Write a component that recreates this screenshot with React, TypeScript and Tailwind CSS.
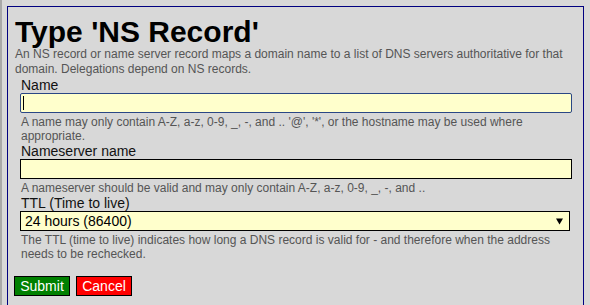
import React from 'react';

const font = { fontFamily: '"Liberation Sans", Arial, sans-serif' };

const Help = ({ children }: { children: React.ReactNode }) => (
  <p className="mt-[2px] ml-[6px] pr-[14px] text-[12px] leading-[14px] text-[#555555]">{children}</p>
);

const Label = ({ children }: { children: React.ReactNode }) => (
  <label className="block ml-[6px] text-[14px] leading-[16px] text-[#111111]">{children}</label>
);

export default function App() {
  return (
    <div className="w-[590px] h-[305px] overflow-hidden bg-[#d8d8d8] border-l-2 border-[#a8a8a8] pl-[5px] pt-[6px]" style={font}>
      <div className="w-[577px] h-[320px] border border-[#000080] pl-[7px]">
        <h1 className="mt-[10px] text-[30px] leading-[30px] font-bold text-black">Type 'NS Record'</h1>
        <p className="text-[12px] leading-[15px] text-[#555555] pr-[10px]">
          An NS record or name server record maps a domain name to a list of DNS servers authoritative for that
          domain. Delegations depend on NS records.
        </p>

        <Label>Name</Label>
        <div className="relative ml-[5px] w-[552px]">
          <input
            type="text"
            className="block w-full h-[20px] bg-[#ffffcc] border border-[#2a4785] rounded-[2px] outline-none px-[2px] text-[14px]"
          />
          <span className="absolute left-[3px] top-[3px] w-px h-[14px] bg-black" />
        </div>
        <Help>A name may only contain A-Z, a-z, 0-9, _, -, and .. '@', '*', or the hostname may be used where appropriate.</Help>

        <Label>Nameserver name</Label>
        <input
          type="text"
          className="block ml-[5px] w-[552px] h-[20px] bg-[#ffffcc] border border-black outline-none px-[2px] text-[14px]"
        />
        <Help>A nameserver should be valid and may only contain A-Z, a-z, 0-9, _, -, and ..</Help>

        <Label>TTL (Time to live)</Label>
        <div className="relative ml-[5px] w-[550px]">
          <select
            defaultValue="86400"
            className="block w-full h-[20px] appearance-none bg-[#ffffcc] border border-black rounded-none outline-none pl-[4px] text-[14px] leading-[18px] text-black"
            style={font}
          >
            <option value="3600">1 hour (3600)</option>
            <option value="86400">24 hours (86400)</option>
          </select>
          <svg className="absolute right-[7px] top-[7px]" width="7" height="7" viewBox="0 0 7 7">
            <path d="M0 0.5 H7 L3.5 6.5 Z" fill="#000" />
          </svg>
        </div>
        <Help>The TTL (time to live) indicates how long a DNS record is valid for - and therefore when the address needs to be rechecked.</Help>

        <div className="mt-[15px] flex gap-[6px] ml-[-1px]">
          <button className="w-[56px] h-[20px] bg-[#008000] border border-black text-white text-[14px] leading-[18px]">Submit</button>
          <button className="w-[56px] h-[20px] bg-[#ff0000] border border-black text-white text-[14px] leading-[18px]">Cancel</button>
        </div>
      </div>
    </div>
  );
}
